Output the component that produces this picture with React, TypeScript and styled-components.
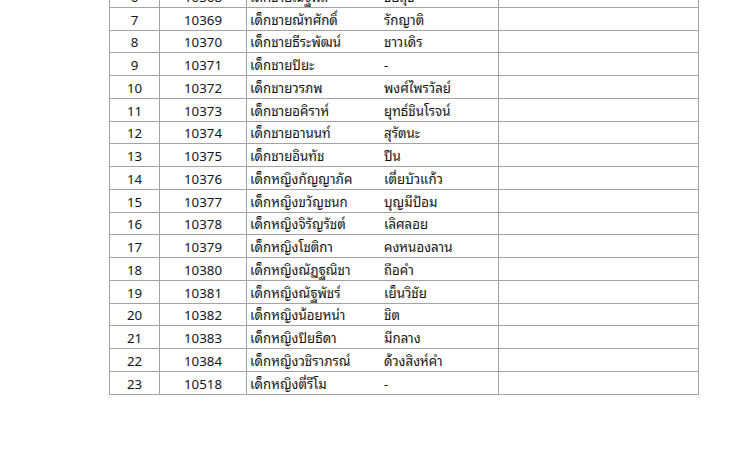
import styled, { createGlobalStyle } from "styled-components";

const GlobalStyle = createGlobalStyle`
  html, body {
    margin: 0;
    padding: 0;
    background: #ffffff;
  }
  body {
    width: 750px;
    height: 462px;
    overflow: hidden;
    font-family: "Noto Sans Thai Looped", "Noto Sans Thai", "Liberation Sans", "DejaVu Sans", sans-serif;
    color: #151515;
  }
`;

const Page = styled.div`
  padding-left: 109px;
  margin-top: -16px;
`;

const Table = styled.table`
  border-collapse: collapse;
  table-layout: fixed;
  width: 589px;
  font-size: 13.3px;
`;

const Row = styled.tr`
  height: 22.75px;
`;

const Cell = styled.td<{ $align?: "left" | "center" }>`
  border: 1px solid #a3a3a3;
  padding: 0;
  text-align: ${(p) => p.$align ?? "left"};
  vertical-align: middle;
  line-height: 20px;
  white-space: nowrap;
  overflow: hidden;
`;

const NameCell = styled(Cell)`
  padding-left: 3px;
`;

const NameLine = styled.div`
  display: grid;
  grid-template-columns: 134px 1fr;
`;

type Student = [number, string, string, string];

const students: Student[] = [
  [6, "10368", "เด็กชายณัฐพล", "ชัยสุข"],
  [7, "10369", "เด็กชายณัทศักดิ์", "รักญาติ"],
  [8, "10370", "เด็กชายธีระพัฒน์", "ชาวเดิร"],
  [9, "10371", "เด็กชายปิยะ", "-"],
  [10, "10372", "เด็กชายวรภพ", "พงศ์ไพรวัลย์"],
  [11, "10373", "เด็กชายอคิราห์", "ยุทธ์ชินโรจน์"],
  [12, "10374", "เด็กชายอานนท์", "สุรัตนะ"],
  [13, "10375", "เด็กชายอินทัช", "ปีน"],
  [14, "10376", "เด็กหญิงกัญญาภัค", "เตี่ยบัวแก้ว"],
  [15, "10377", "เด็กหญิงขวัญชนก", "บุญมีป้อม"],
  [16, "10378", "เด็กหญิงจิรัญรัชต์", "เลิศลอย"],
  [17, "10379", "เด็กหญิงโชติกา", "คงหนองลาน"],
  [18, "10380", "เด็กหญิงณัฏฐณิชา", "ถือคำ"],
  [19, "10381", "เด็กหญิงณัฐพัชร์", "เย็นวิชัย"],
  [20, "10382", "เด็กหญิงน้อยหน่า", "ชิต"],
  [21, "10383", "เด็กหญิงปิยธิดา", "มีกลาง"],
  [22, "10384", "เด็กหญิงวชิราภรณ์", "ด้วงสิงห์คำ"],
  [23, "10518", "เด็กหญิงตี่รีโม", "-"],
];

export default function App() {
  return (
    <>
      <GlobalStyle />
      <Page>
        <Table>
          <colgroup>
            <col style={{ width: 50 }} />
            <col style={{ width: 87 }} />
            <col style={{ width: 252 }} />
            <col style={{ width: 200 }} />
          </colgroup>
          <tbody>
            {students.map(([no, id, first, last]) => (
              <Row key={id}>
                <Cell $align="center">{no}</Cell>
                <Cell $align="center">{id}</Cell>
                <NameCell>
                  <NameLine>
                    <span>{first}</span>
                    <span>{last}</span>
                  </NameLine>
                </NameCell>
                <Cell />
              </Row>
            ))}
          </tbody>
        </Table>
      </Page>
    </>
  );
}
